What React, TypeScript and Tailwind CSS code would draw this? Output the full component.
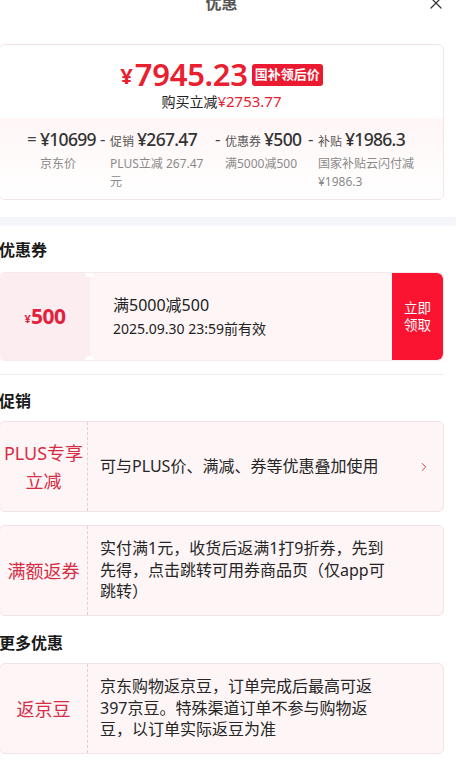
import { X, ChevronRight } from 'lucide-react';

const font = { fontFamily: '"Noto Sans", "Noto Sans CJK SC", sans-serif' };

interface PriceColProps {
  op: string;
  label?: string;
  value: string;
  desc: string;
  colW: string;
  opW: string;
  descW: string;
}

const PriceCol = ({ op, label, value, desc, colW, opW, descW }: PriceColProps) => (
  <div className={`flex items-start shrink-0 ${colW}`}>
    <span className={`text-[17px] leading-[24px] text-[#444] shrink-0 ${opW}`}>{op}</span>
    <div>
      <div className="flex items-baseline whitespace-nowrap">
        {label && <span className="text-[12px] text-[#555] mr-[3px]">{label}</span>}
        <span className="text-[17.5px] leading-[24px] font-medium text-[#333] tracking-[-0.7px]">{value}</span>
      </div>
      <p className={`text-[12px] leading-[18px] text-[#8a8a8a] mt-[4px] ${descW}`}>{desc}</p>
    </div>
  </div>
);

interface PromoCardProps {
  tag: string[];
  text: string;
  arrow?: boolean;
}

const PromoCard = ({ tag, text, arrow }: PromoCardProps) => (
  <div className="flex min-h-[91px] rounded-md border border-[#f3e3e6] bg-[#fdf5f6]">
    <div className="w-[88px] shrink-0 flex flex-col items-center justify-center border-r border-dashed border-[#e9cdd2] text-[18px] leading-[28px] text-[#d72c45]">
      {tag.map((t) => (
        <span key={t}>{t}</span>
      ))}
    </div>
    <div className="flex-1 flex items-center pl-[12px] py-3">
      <p className="text-[16px] leading-[21.5px] text-[#262626]">{text}</p>
    </div>
    <div className="w-[54px] shrink-0 flex items-center justify-end pr-[12px]">
      {arrow && <ChevronRight size={14} strokeWidth={1.6} className="text-[#d72c45]" />}
    </div>
  </div>
);

const Heading = ({ children }: { children: string }) => (
  <h2 className="text-[16px] leading-[24px] font-bold text-[#1a1a1a]">{children}</h2>
);

export default function App() {
  return (
    <div className="w-[461px] h-[783px] overflow-hidden bg-white" style={font}>
      <div className="-ml-[13px] w-[469px] px-3">
        <header className="-mt-[19px] h-[44px] flex items-center justify-center relative">
          <span className="text-[16px] font-bold text-[#555]">优惠</span>
          <X size={20} strokeWidth={1.5} className="absolute -right-[2px] top-[12px] text-[#333]" />
        </header>

        <section className="mt-[19px] rounded-md border border-[#f1e4e6] overflow-hidden">
          <div className="flex flex-col items-center pt-[11px] pb-[7px] bg-white">
            <div className="flex items-center h-[36px]">
              <span className="text-[22px] font-bold text-[#e8202f] mr-[2px] mt-[3px]">¥</span>
              <span className="text-[31px] font-semibold text-[#e8202f] leading-none tracking-[-0.3px]">7945.23</span>
              <span className="ml-[4px] mt-[2px] px-[3px] h-[22px] flex items-center rounded-[3px] bg-[#ec1a30] text-white text-[13px] font-bold">
                国补领后价
              </span>
            </div>
            <p className="text-[14px] leading-[19px] text-[#222]">
              购买立减<span className="text-[#e8202f] text-[15px]">¥2753.77</span>
            </p>
          </div>
          <div className="flex pl-[27px] pt-[9px] pb-[8px] bg-gradient-to-b from-[#fff6f6] to-white">
            <PriceCol op="=" value="¥10699" desc="京东价" colW="w-[73px]" opW="w-[13px]" descW="w-[55px]" />
            <PriceCol op="-" label="促销" value="¥267.47" desc="PLUS立减 267.47元" colW="w-[115px]" opW="w-[10px]" descW="w-[100px]" />
            <PriceCol op="-" label="优惠券" value="¥500" desc="满5000减500" colW="w-[93px]" opW="w-[10px]" descW="w-[80px]" />
            <PriceCol op="-" label="补贴" value="¥1986.3" desc="国家补贴云闪付减¥1986.3" colW="w-[112px]" opW="w-[10px]" descW="w-[100px]" />
          </div>
        </section>

        <div className="-mx-3 mt-[17px] h-[9px] bg-[#f5f6fa]" />

        <div className="mt-[12px]">
          <Heading>优惠券</Heading>
        </div>

        <div className="mt-[10px] flex h-[89px] rounded-md overflow-hidden border border-[#f6e8ea] relative">
          <div className="w-[90px] shrink-0 flex items-center justify-center bg-[#fcedf0] text-[#e3213c]">
            <span className="text-[11px] font-bold mt-[5px]">¥</span>
            <span className="text-[21px] font-bold tracking-[-0.5px]">500</span>
          </div>
          <div className="flex-1 flex flex-col justify-center pl-[23px] bg-[#fdf5f6]">
            <p className="text-[16px] leading-[24px] text-[#222]">满5000减500</p>
            <p className="text-[14px] leading-[24px] text-[#222]">2025.09.30 23:59前有效</p>
          </div>
          <div className="w-[51px] shrink-0 flex flex-col items-center justify-center bg-[#fa1431] text-white text-[13.5px] leading-[17px] rounded-r-md">
            <span>立即</span>
            <span>领取</span>
          </div>
          <span className="absolute left-[85px] -top-[5px] w-[9px] h-[9px] rounded-full bg-white" />
          <span className="absolute left-[85px] -bottom-[5px] w-[9px] h-[9px] rounded-full bg-white" />
        </div>

        <div className="mt-[13px] h-px bg-[#ececec]" />

        <div className="mt-[14px]">
          <Heading>促销</Heading>
        </div>
        <div className="mt-[8px] flex flex-col gap-[13px]">
          <PromoCard tag={['PLUS专享', '立减']} text="可与PLUS价、满减、券等优惠叠加使用" arrow />
          <PromoCard tag={['满额返券']} text="实付满1元，收货后返满1打9折券，先到先得，点击跳转可用券商品页（仅app可跳转）" />
        </div>

        <div className="mt-[15px]">
          <Heading>更多优惠</Heading>
        </div>
        <div className="mt-[8px]">
          <PromoCard tag={['返京豆']} text="京东购物返京豆，订单完成后最高可返397京豆。特殊渠道订单不参与购物返豆，以订单实际返豆为准" />
        </div>
      </div>
    </div>
  );
}
